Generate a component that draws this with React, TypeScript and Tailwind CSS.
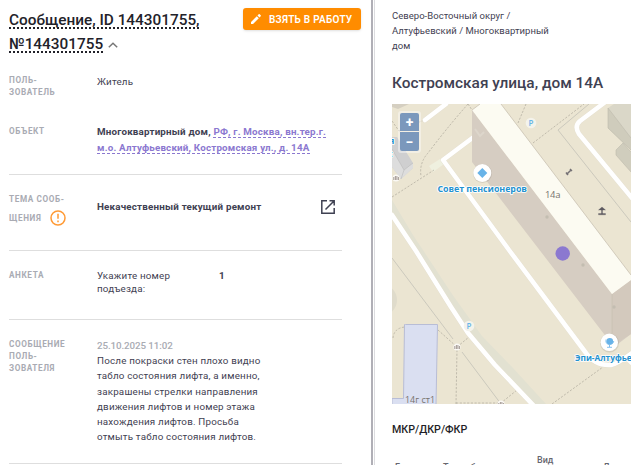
import type { ReactNode } from 'react';

const Row = ({ label, children }: { label: ReactNode; children: ReactNode }) => (
  <div className="flex">
    <div className="w-[88px] shrink-0 pt-px text-[8.200px] font-bold leading-[12px] tracking-[0.600px] text-[#a9abb3]">
      {label}
    </div>
    <div className="min-w-0 flex-1">{children}</div>
  </div>
);

const WarningIcon = () => (
  <svg className="ml-[9px] h-4 w-4" viewBox="0 0 16 16" fill="none" stroke="#ff9a35">
    <circle cx="8" cy="8" r="7" strokeWidth="1.5" />
    <path d="M8 3.8v5M8 10.5v1.7" strokeWidth="1.5" />
  </svg>
);

const OpenIcon = () => (
  <svg className="h-3.5 w-3.5" viewBox="0 0 14 14" fill="none" stroke="#3f4152" strokeWidth="1.5">
    <path d="M6 .8H.8v12.4h12.4V8M8.5.8h4.7v4.7M13 1 4.5 9.5" />
  </svg>
);

/* --- MAP --- */
const Gate = ({ x, y }: { x: number; y: number }) => (
  <g transform={`translate(${x} ${y})`}>
    <circle r="3.5" fill="#fbf9f5" />
    <path d="M-2.2 2v-3M-.6 2v-4M.9 2v-4M2.4 2v-3" stroke="#8d827c" strokeWidth=".8" />
  </g>
);

const Parking = ({ x, y }: { x: number; y: number }) => (
  <g>
    <circle cx={x} cy={y} r="5.3" fill="#f4f3ec" />
    <text x={x} y={y + 2.9} textAnchor="middle" fontSize="8" fill="#66b5e8" fontWeight="600">P</text>
  </g>
);

const MapDrawing = () => (
  <svg className="block h-[300px] w-[239px]" viewBox="0 0 239 300" fontFamily="Open Sans, sans-serif">
    <rect width="239" height="300" fill="#ebe5d2" />
    <path d="M0 0h17L6 5 0 3Z" fill="#d5cfc1" />
    <circle cx="-11" cy="196" r="16" fill="#dfdbcb" />
    {/* green strip along the road */}
    <path d="M0 96 21 131 60 190 90 232 121 264 154 300h-14L100 257 62 205 20 142 0 112Z" fill="#e2e1d1" />

    {/* left building */}
    <path d="M0 33h5l16 26v5L9 75 0 63Z" fill="#cfcfd0" />
    <path d="M0 45 12 66 21 59V64L9 75 0 63Z" fill="#dddddd" />
    <path d="M0 45 12 66 21 59M12 66 9 75" fill="none" stroke="#bbb" strokeWidth=".6" />
    <path d="m37 62 11-7 4 5-11 8Z" fill="#eff0df" />

    {/* right buildings */}
    <path d="M216 4 222 0h17v46L216 24Z" fill="#dad7c8" />
    <path d="M216 4 239 34V46L216 24Z" fill="#cfccbc" />
    <path d="M224 46 231 39 239 48V68L224 51Z" fill="#d0cdbd" />
    <path d="M216 4 239 34M216 4V24L239 46M224 46 231 39 239 48M224 46V51L239 68" fill="none" stroke="#bebbad" strokeWidth=".6" />

    {/* footpaths */}
    <g fill="none" stroke="#b5b0a2" strokeWidth=".8" strokeDasharray="2.2 1.5">
      <path d="M76 0C60 18 45 37 36 49Q27 59 29 72M76 0 84 12" />
      <path d="M0 93 42 66M0 17 7 27 32 16" />
      <path d="M134 0 126 19M141 39 192 0" />
      <path d="M1 234Q2 224 13 223M46 226 65 243 77 233M65 246 64 300M64 299H109L125 286" />
      <path d="M160 300 211 263" />
    </g>
    <path d="M197 0 166 26 239 118M0 154 61 235M70 248 109 300" fill="none" stroke="#c7c5ba" strokeWidth=".9" />

    {/* roads */}
    <g fill="none" stroke="#e3decf" strokeWidth="5.2" strokeLinecap="round" strokeLinejoin="round">
      <path d="M33 16 54 0M91 26 51 56 117 146 194 249Q203 262 219 261 225 260 240 249" />
      <path d="M0 111 24 147 59 203 76 229 103 261 142 302M212-1 188 17Q182 22 187 30L240 94" />
    </g>
    <g fill="none" stroke="#fff" strokeWidth="4.6" strokeLinecap="round" strokeLinejoin="round">
      <path d="M33 16 54 0M91 26 51 56 117 146 194 249Q203 262 219 261 225 260 240 249M236 255l5 5" />
      <path d="M0 111 24 147 59 203 76 229 103 261 142 302M212-1 188 17Q182 22 187 30L240 94" />
    </g>

    {/* main building */}
    <path d="M80 6 220 190 239 176V230L222 243 80 58Z" fill="#d6cdc2" />
    <path d="M220 190 239 176V230L220 242Z" fill="#d3c9bd" />
    <path d="M80 6 88 0h21L239 171v5L220 190Z" fill="#fcfbf2" />
    <path d="M109 0 239 171M80 6 88 0M220 190V240" fill="none" stroke="#c9c2b3" strokeWidth=".8" />
    <path d="m83 25 5 7 4-4" fill="none" stroke="#ddd6cb" strokeWidth="2" />
    <g fill="#c3bdb1">
      <circle cx="155" cy="113" r="1.7" />
      <circle cx="191" cy="161" r="1.7" />
      <circle cx="222" cy="203" r="1.7" />
    </g>

    {/* lower left building */}
    <path d="M13.5 220.500h32L44 301H0v-6.500h11.500L12.500 220.500Z" fill="#dadff1" stroke="#b8bdd6" />

    <Parking x={139} y={19} />
    <Parking x={77} y={222} />
    <Gate x={65} y={243} />
    <Gate x={109} y={300} />
    <Gate x={4} y={74} />

    {/* street furniture */}
    <path d="m174.500 70.500 5-5M174 68.500l2 2.500M178 65l2 2" stroke="#747074" strokeWidth="1.500" />
    <path d="m206.500 106 3.500-3 3.500 3ZM209.500 106h1v4h-1ZM206.500 109.500h7v1.300h-7Z" fill="#5d5960" stroke="#5d5960" strokeWidth=".3" />

    <text x="153" y="94" fontSize="9.500" textLength="15.500" fill="#77736d" stroke="#fcfbf2" strokeWidth="1.500" paintOrder="stroke">14а</text>
    <text x="13" y="298.500" fontSize="9.500" textLength="30" lengthAdjust="spacingAndGlyphs" fill="#77736d">14г ст1</text>

    {/* places */}
    <circle cx="90.500" cy="69.500" r="9.500" fill="#00000018" />
    <circle cx="90.300" cy="69" r="9" fill="#fff" />
    <path d="m90.300 64 5 5-5 5-5-5Z" fill="#68b3e8" />
    <circle cx="217.500" cy="239" r="9.500" fill="#00000018" />
    <circle cx="217.300" cy="238.300" r="8.700" fill="#fff" />
    <circle cx="217.800" cy="237.300" r="3.300" fill="#68b3e8" />
    <path d="M214 235.500v3q3.300 4 7 .5l.8-2M217.500 240.500v2.500M215 243.300h5" fill="none" stroke="#68b3e8" strokeWidth=".8" />
    <g fontSize="9" fontWeight="700" fill="#2391d0" stroke="#fff" strokeWidth="1.700" paintOrder="stroke" strokeLinejoin="round">
      <text x="45.500" y="88" textLength="89.500">Совет пенсионеров</text>
      <text x="183" y="257" textLength="67" lengthAdjust="spacingAndGlyphs">Эпи-Алтуфьево</text>
      <text x="-3" y="40">я</text>
      <text x="-4" y="53">с</text>
    </g>
    <circle cx="170.700" cy="149.500" r="7.200" fill="#8b78d0" />
  </svg>
);

const App = () => {
  return (
    <div className="flex h-screen w-full overflow-hidden bg-white font-['Roboto',sans-serif] text-[#3f4152]">
      {/* --- MESSAGE --- */}
      <section className="w-[371px] shrink-0 pl-[9px] pt-2">
        <div className="flex items-start justify-between pr-[10px]">
          <h1 className="whitespace-nowrap text-[15.350px] font-medium leading-6 text-[#22222a]">
            <span className="underline decoration-dotted decoration-2 underline-offset-[2px] [text-decoration-skip-ink:none]">
              Сообщение, ID 144301755,<br />№144301755
            </span>
            <svg className="ml-[5px] inline h-[6px] w-[10px] align-[1px]" viewBox="0 0 10 6" fill="none" stroke="#777" strokeWidth="1.5">
              <path d="m.8 5.200 4.200-4 4.200 4" />
            </svg>
          </h1>
          <button className="flex h-[22px] w-[118px] items-center rounded-[3px] bg-[#ff8c00] pl-2 text-[10px] font-semibold tracking-[0.250px] text-white shadow-sm">
            <svg className="mr-2 h-[10px] w-[10px] shrink-0" viewBox="0 0 10 10" fill="#fff">
              <path d="M0 8v2h2l5.800-5.800-2-2ZM6.500 1.500l2 2L9.700 2.300a.7.7 0 0 0 0-1L8.700.3a.7.7 0 0 0-1 0Z" />
            </svg>
            <span className="whitespace-nowrap">ВЗЯТЬ В РАБОТУ</span>
          </button>
        </div>

        <div className="w-[333px] text-[9.800px] tracking-[0.190px]">
          <div className="h-[51px] pt-[17px]">
            <Row label={<>ПОЛЬ-<br />ЗОВАТЕЛЬ</>}>
              <p className="pt-[3px] leading-[12px]">Житель</p>
            </Row>
          </div>
          <div className="h-[68px] border-b border-[#dedede] pt-[17px]">
            <Row label="ОБЪЕКТ">
              <p className="whitespace-nowrap font-bold leading-4">
                Многоквартирный дом,{' '}
                <span className="border-b border-dashed border-[#8b78d0] text-[#8b78d0]">РФ, г. Москва, вн.тер.г.</span>
                <br />
                <span className="border-b border-dashed border-[#8b78d0] text-[#8b78d0]">м.о. Алтуфьевский, Костромская ул., д. 14А</span>
              </p>
            </Row>
          </div>
          <div className="h-[76px] border-b border-[#dedede] pt-[17px]">
            <Row label={<>ТЕМА СООБ-<span className="mt-[5px] flex items-center">ЩЕНИЯ<WarningIcon /></span></>}>
              <div className="flex items-center justify-between pr-[7px] pt-[7px]">
                <b className="leading-[16px]">Некачественный текущий ремонт</b>
                <OpenIcon />
              </div>
            </Row>
          </div>
          <div className="h-[69px] border-b border-[#dedede] pt-[17px]">
            <Row label="АНКЕТА">
              <div className="flex pt-px leading-[13px]">
                <p className="w-[122px]">Укажите номер<br />подъезда:</p>
                <b>1</b>
              </div>
            </Row>
          </div>
          <div className="h-[144px] border-b border-[#dedede] pt-[17px]">
            <Row label={<>СООБЩЕНИЕ<br />ПОЛЬ-<br />ЗОВАТЕЛЯ</>}>
              <p className="whitespace-nowrap pt-px leading-[15.200px]">
                <span className="font-medium tracking-[-0.100px] text-[#a9abb3]">25.10.2025 11:02</span>
                <br />
                После покраски стен плохо видно<br />
                табло состояния лифта, а именно,<br />
                закрашены стрелки направления<br />
                движения лифтов и номер этажа<br />
                нахождения лифтов. Просьба<br />
                отмыть табло состояния лифтов.
              </p>
            </Row>
          </div>
        </div>
      </section>

      <div className="mr-px w-0.5 shrink-0 bg-[#b0afb6]" />

      {/* --- HOUSE --- */}
      <aside className="min-w-0 flex-1 border-l border-[#dcdcdf] pl-[17px] pt-2">
        <p className="whitespace-nowrap text-[9.500px] leading-[15px] tracking-[0.030px]">
          Северо-Восточный округ /<br />
          Алтуфьевский / Многоквартирный<br />
          дом
        </p>
        <h2 className="mt-[18px] whitespace-nowrap text-[15.400px] font-medium leading-6">Костромская улица, дом 14А</h2>
        <div className="relative mt-[9px] h-[300px] overflow-hidden">
          <MapDrawing />
          <div className="absolute left-1.5 top-[7px] flex flex-col gap-px rounded-[3px] bg-white/40 p-0.5 text-[14px] font-bold leading-none text-white">
            <button className="flex h-[18px] w-[19px] items-center justify-center rounded-t-[2px] bg-[#7b98bc]">+</button>
            <button className="flex h-[19px] w-[19px] items-center justify-center rounded-b-[2px] bg-[#7b98bc]">−</button>
          </div>
        </div>
        <h3 className="mt-[18px] text-[10.700px] font-medium leading-4 text-[#1f1f28]">МКР/ДКР/ФКР</h3>
        <div className="mt-[15px] flex items-center whitespace-nowrap text-[9px] font-medium leading-[14px] text-[#66666e]">
          <span className="w-[48px] pl-[3px]">Год</span>
          <span className="w-[97px] pl-[3px]">Тип работ</span>
          <span className="w-[66px]">Вид<br />работ</span>
          <span>Дата</span>
        </div>
      </aside>
    </div>
  );
};

export default App;
